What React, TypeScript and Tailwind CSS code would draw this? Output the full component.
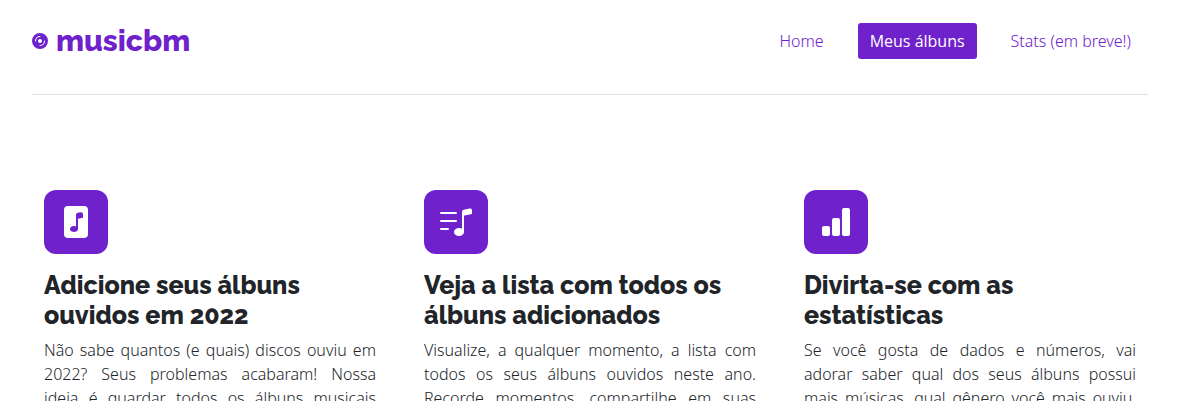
import { BsBarChartFill, BsDiscFill, BsFileMusicFill, BsMusicNoteList } from "react-icons/bs";
import type { IconType } from "react-icons";

type Feature = { icon: IconType; title: string; lines: string[] };

const features: Feature[] = [
  {
    icon: BsFileMusicFill,
    title: "Adicione seus álbuns ouvidos em 2022",
    lines: [
      "Não sabe quantos (e quais) discos ouviu em",
      "2022? Seus problemas acabaram! Nossa",
      "ideia é guardar todos os álbuns musicais",
    ],
  },
  {
    icon: BsMusicNoteList,
    title: "Veja a lista com todos os álbuns adicionados",
    lines: [
      "Visualize, a qualquer momento, a lista com",
      "todos os seus álbuns ouvidos neste ano.",
      "Recorde momentos, compartilhe em suas",
    ],
  },
  {
    icon: BsBarChartFill,
    title: "Divirta-se com as estatísticas",
    lines: [
      "Se você gosta de dados e números, vai",
      "adorar saber qual dos seus álbuns possui",
      "mais músicas, qual gênero você mais ouviu,",
    ],
  },
];

function Header() {
  return (
    <header className="flex items-start justify-between border-b border-[#dee2e6] pt-[23px] pb-[35px] text-[#6f21cb]">
      <a
        href="#inicio"
        className="flex h-9 items-center gap-2 font-[Raleway,Inter,'Open_Sans',sans-serif] text-[30px] leading-9 font-extrabold"
      >
        <BsDiscFill className="size-4" aria-hidden="true" />
        musicbm
      </a>
      <nav className="flex gap-[22px] pr-[5px] leading-6">
        <a href="#home" className="px-3 py-1.5">
          Home
        </a>
        <a href="#albuns" className="rounded-[3px] bg-[#6f21cb] px-3 py-1.5 font-['Open_Sans',sans-serif] font-medium text-white">
          Meus álbuns
        </a>
        <a href="#stats" className="px-3 py-1.5">
          Stats (em breve!)
        </a>
      </nav>
    </header>
  );
}

function FeatureCard({ icon: Icon, title, lines }: Feature) {
  return (
    <article>
      <div className="mb-4 flex size-16 items-center justify-center rounded-xl bg-[#6f21cb] text-white">
        <Icon className="size-8" aria-hidden="true" />
      </div>
      <h2 className="mb-2 font-[Raleway,Inter,'Open_Sans',sans-serif] text-[25px] leading-[30px] font-extrabold">
        {title}
      </h2>
      <p className="text-justify [text-align-last:justify]">
        {lines.map((line) => (
          <span key={line} className="block">
            {line}
          </span>
        ))}
      </p>
    </article>
  );
}

export default function App() {
  return (
    <div className="min-h-screen bg-white font-['Noto_Sans','Open_Sans',sans-serif] text-base leading-6 font-[350] text-[#212529]">
      <div className="max-w-[1180px] px-8">
        <Header />
        <main className="grid grid-cols-3 gap-12 px-3 pt-[95px]">
          {features.map((feature) => (
            <FeatureCard key={feature.title} {...feature} />
          ))}
        </main>
      </div>
    </div>
  );
}
